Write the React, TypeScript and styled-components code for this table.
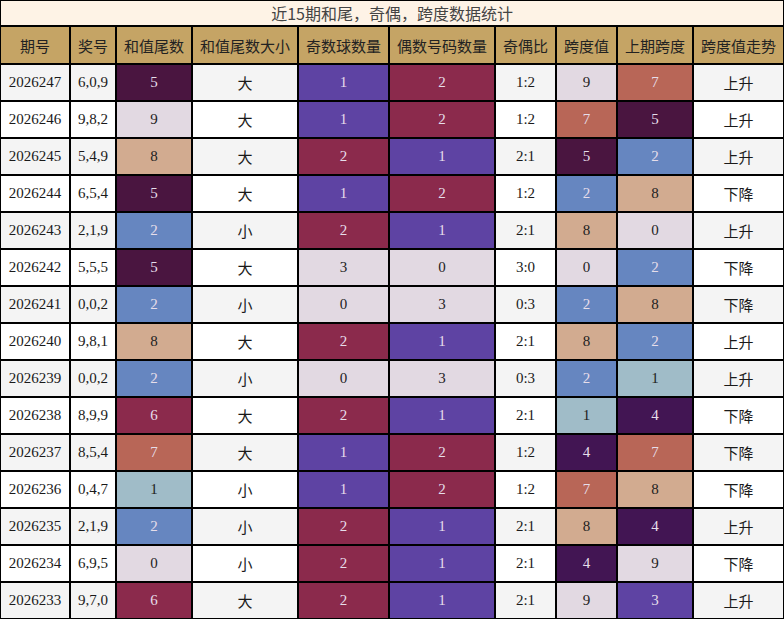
import React from "react";
import styled, { createGlobalStyle } from "styled-components";

const GlobalStyle = createGlobalStyle`
  html, body { margin: 0; padding: 0; background: #ffffff; }
  * { box-sizing: border-box; }
`;

const CJK = `"Noto Sans CJK SC", "Noto Sans", sans-serif`;
const SERIF = `"Liberation Serif", "Times New Roman", serif`;

const Table = styled.table`
  width: 784px;
  table-layout: fixed;
  border-collapse: separate;
  border-spacing: 0;
`;

const TitleCell = styled.th`
  height: 26px;
  padding: 0;
  border: 1px solid #000;
  background: #fef3e6;
  color: #444;
  font-family: ${CJK};
  font-size: 16px;
  font-weight: 400;
  text-align: center;
  line-height: 22px;
`;

const HeadCell = styled.th`
  height: 38px;
  padding: 0;
  border: 1px solid #000;
  background: #c5a465;
  color: #222;
  font-family: ${CJK};
  font-size: 15px;
  font-weight: 400;
  text-align: center;
  white-space: nowrap;
`;

const Row = styled.tr<{ $odd: boolean }>`
  background: ${(p) => (p.$odd ? "#f4f4f4" : "#ffffff")};
`;

const Cell = styled.td<{ $cjk?: boolean }>`
  height: 37px;
  padding: 0;
  border: 1px solid #000;
  text-align: center;
  font-family: ${(p) => (p.$cjk ? CJK : SERIF)};
  font-size: ${(p) => (p.$cjk ? "15px" : "15px")};
  color: #1a1a1a;
`;

const ColorCell = styled(Cell)<{ $bg: string; $fg: string }>`
  background: ${(p) => p.$bg};
  color: ${(p) => p.$fg};
`;

const DIGIT = [
  "#e2d9e2",
  "#a0bcc8",
  "#6686c0",
  "#5e43a3",
  "#421553",
  "#4a1540",
  "#8b2a4c",
  "#b86657",
  "#d2ab90",
  "#e2d9e2",
];
const DIGIT_DARK = [false, false, true, true, true, true, true, true, false, false];
const COUNT = ["#e2d9e2", "#5e43a3", "#8b2a4c", "#e2d9e2"];
const COUNT_DARK = [false, true, true, false];

const LIGHT = "#e6deea";
const DARK = "#222";

const digitStyle = (v: number) => ({ $bg: DIGIT[v], $fg: DIGIT_DARK[v] ? LIGHT : DARK });
const countStyle = (v: number) => ({ $bg: COUNT[v], $fg: COUNT_DARK[v] ? LIGHT : DARK });

const widths = [70, 46, 76, 106, 91, 106, 61, 61, 76, 91];
const headers = ["期号", "奖号", "和值尾数", "和值尾数大小", "奇数球数量", "偶数号码数量", "奇偶比", "跨度值", "上期跨度", "跨度值走势"];

type R = [string, string, number, string, number, number, string, number, number, string];
const rows: R[] = [
  ["2026247", "6,0,9", 5, "大", 1, 2, "1:2", 9, 7, "上升"],
  ["2026246", "9,8,2", 9, "大", 1, 2, "1:2", 7, 5, "上升"],
  ["2026245", "5,4,9", 8, "大", 2, 1, "2:1", 5, 2, "上升"],
  ["2026244", "6,5,4", 5, "大", 1, 2, "1:2", 2, 8, "下降"],
  ["2026243", "2,1,9", 2, "小", 2, 1, "2:1", 8, 0, "上升"],
  ["2026242", "5,5,5", 5, "大", 3, 0, "3:0", 0, 2, "下降"],
  ["2026241", "0,0,2", 2, "小", 0, 3, "0:3", 2, 8, "下降"],
  ["2026240", "9,8,1", 8, "大", 2, 1, "2:1", 8, 2, "上升"],
  ["2026239", "0,0,2", 2, "小", 0, 3, "0:3", 2, 1, "上升"],
  ["2026238", "8,9,9", 6, "大", 2, 1, "2:1", 1, 4, "下降"],
  ["2026237", "8,5,4", 7, "大", 1, 2, "1:2", 4, 7, "下降"],
  ["2026236", "0,4,7", 1, "小", 1, 2, "1:2", 7, 8, "下降"],
  ["2026235", "2,1,9", 2, "小", 2, 1, "2:1", 8, 4, "上升"],
  ["2026234", "6,9,5", 0, "小", 2, 1, "2:1", 4, 9, "下降"],
  ["2026233", "9,7,0", 6, "大", 2, 1, "2:1", 9, 3, "上升"],
];

export default function App() {
  return (
    <>
      <GlobalStyle />
      <Table>
        <colgroup>
          {widths.map((w, i) => (
            <col key={i} style={{ width: w }} />
          ))}
        </colgroup>
        <thead>
          <tr>
            <TitleCell colSpan={10}>近15期和尾，奇偶，跨度数据统计</TitleCell>
          </tr>
          <tr>
            {headers.map((h) => (
              <HeadCell key={h}>{h}</HeadCell>
            ))}
          </tr>
        </thead>
        <tbody>
          {rows.map((r, i) => (
            <Row key={r[0]} $odd={i % 2 === 0}>
              <Cell>{r[0]}</Cell>
              <Cell>{r[1]}</Cell>
              <ColorCell {...digitStyle(r[2])}>{r[2]}</ColorCell>
              <Cell $cjk>{r[3]}</Cell>
              <ColorCell {...countStyle(r[4])}>{r[4]}</ColorCell>
              <ColorCell {...countStyle(r[5])}>{r[5]}</ColorCell>
              <Cell>{r[6]}</Cell>
              <ColorCell {...digitStyle(r[7])}>{r[7]}</ColorCell>
              <ColorCell {...digitStyle(r[8])}>{r[8]}</ColorCell>
              <Cell $cjk>{r[9]}</Cell>
            </Row>
          ))}
        </tbody>
      </Table>
    </>
  );
}
